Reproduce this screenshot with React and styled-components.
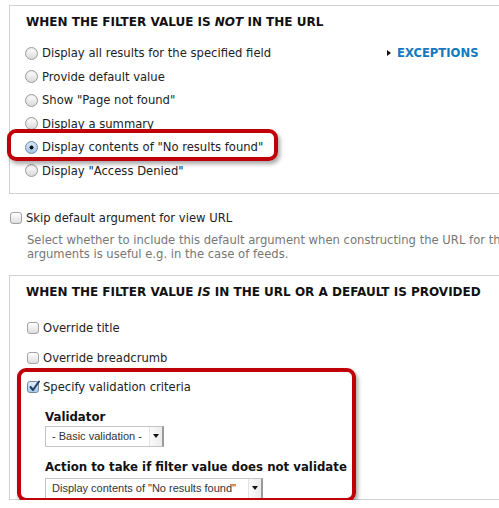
import styled, { createGlobalStyle } from 'styled-components';

const GlobalStyle = createGlobalStyle`
  html, body {
    margin: 0;
    padding: 0;
    background: #fff;
    overflow: hidden;
  }
  body {
    font-family: "DejaVu Sans", "Liberation Sans", sans-serif;
    color: #222;
  }
`;

const Page = styled.div`
  width: 720px;
  padding: 5px 0 0 9px;
  box-sizing: border-box;
`;

const Fieldset = styled.div`
  width: 580px;
  border: 1px solid #d2d2d2;
  padding: ${(p) => p.$padding};
  box-sizing: border-box;
`;

const Legend = styled.div`
  font-size: 12px;
  font-weight: bold;
  line-height: 15px;
  text-transform: uppercase;
  color: #111;
  white-space: nowrap;

  em {
    font-style: italic;
  }
`;

const OptionsArea = styled.div`
  display: grid;
  grid-template-columns: 362px auto;
  align-items: start;
  margin-top: 11.25px;
  margin-left: -1px;
`;

const RadioList = styled.div`
  display: flex;
  flex-direction: column;
`;

const Row = styled.label`
  position: relative;
  display: flex;
  align-items: center;
  gap: 4px;
  height: ${(p) => p.$height || 23.5}px;
  font-size: 11.6px;
  white-space: nowrap;
  color: #222;
`;

const Radio = styled.span`
  flex: none;
  width: 13px;
  height: 13px;
  box-sizing: border-box;
  border-radius: 50%;
  border: 1px solid ${(p) => (p.$checked ? '#6f8aa6' : '#9b9b9b')};
  background: ${(p) =>
    p.$checked
      ? 'radial-gradient(circle at 50% 50%, #111 0 1.7px, transparent 2.3px), linear-gradient(#dcebf8, #9fc3e6)'
      : 'linear-gradient(#ffffff, #d9d9d9)'};
  box-shadow: inset 0 1px 1px rgba(0, 0, 0, 0.08);
`;

const Box = styled.span`
  flex: none;
  position: relative;
  width: 12px;
  height: 12px;
  box-sizing: border-box;
  border-radius: 3px;
  border: 1px solid ${(p) => (p.$checked ? '#6f8aa6' : '#a3a3a3')};
  background: ${(p) =>
    p.$checked ? 'linear-gradient(#e2eef9, #a9c8e6)' : 'linear-gradient(#ffffff, #dedede)'};

  svg {
    position: absolute;
    left: 0px;
    top: -2px;
  }
`;

const Highlight = styled.span`
  position: absolute;
  left: ${(p) => p.$left}px;
  top: ${(p) => p.$top}px;
  width: ${(p) => p.$width}px;
  height: ${(p) => p.$height}px;
  box-sizing: border-box;
  border: 4.5px solid #c00008;
  border-radius: 9px;
  box-shadow: 2px 3px 4px rgba(0, 0, 0, 0.35);
  pointer-events: none;
  z-index: 2;
`;

const Exceptions = styled.a`
  display: flex;
  align-items: center;
  gap: 6px;
  height: 23.5px;
  font-size: 11.6px;
  font-weight: bold;
  color: #1279c2;
  text-decoration: none;
  text-transform: uppercase;

  &::before {
    content: '';
    width: 0;
    height: 0;
    border-top: 3px solid transparent;
    border-bottom: 3px solid transparent;
    border-left: 4px solid #111;
  }
`;

const SkipRow = styled(Row)`
  margin-top: 15px;
  margin-left: 1px;
  height: 18px;
`;

const Description = styled.div`
  margin: 6px 0 0 18px;
  font-size: 11.6px;
  line-height: 14px;
  color: #777;
  white-space: nowrap;
`;

const Second = styled(Fieldset)`
  margin-top: 14px;
`;

const CheckList = styled.div`
  display: flex;
  flex-direction: column;
  margin-top: 13.75px;
  margin-left: 1px;
`;

const Group = styled.div`
  position: relative;
`;

const SubForm = styled.div`
  display: flex;
  flex-direction: column;
  align-items: flex-start;
  margin-left: 18px;
`;

const FieldLabel = styled.div`
  font-size: 11.75px;
  font-weight: bold;
  line-height: 14px;
  color: #111;
  white-space: nowrap;
  margin-top: ${(p) => p.$top}px;
`;

const Select = styled.div`
  display: flex;
  align-items: stretch;
  width: ${(p) => p.$width}px;
  height: 21px;
  margin-top: ${(p) => p.$top}px;
  box-sizing: border-box;
  border: 1px solid #c4c4c4;
  border-right: 2px solid #9a9a9a;
  background: #fff;
  font-family: "Liberation Sans", Arial, sans-serif;
  font-size: 11px;
  color: #333;
`;

const SelectText = styled.span`
  flex: 1;
  display: flex;
  align-items: center;
  padding-left: 6px;
  white-space: nowrap;
`;

const SelectButton = styled.span`
  flex: none;
  width: 12px;
  display: flex;
  align-items: center;
  justify-content: center;
  border-left: 1px solid #e4e4e4;
  background: linear-gradient(90deg, #fafafa, #ececec);

  &::after {
    content: '';
    width: 0;
    height: 0;
    border-left: 3px solid transparent;
    border-right: 3px solid transparent;
    border-top: 4px solid #111;
  }
`;

function Check() {
  return (
    <svg width="13" height="13" viewBox="0 0 13 13">
      <path d="M2.5 7 L5 10 L11 1.5" fill="none" stroke="#1d3e66" strokeWidth="2" strokeLinecap="round" strokeLinejoin="round" />
    </svg>
  );
}

const radios = [
  'Display all results for the specified field',
  'Provide default value',
  'Show "Page not found"',
  'Display a summary',
  'Display contents of "No results found"',
  'Display "Access Denied"',
];

export default function App() {
  return (
    <>
      <GlobalStyle />
      <Page>
        <Fieldset $padding="9px 0 10.75px 16px">
          <Legend>
            When the filter value is <em>not</em> in the URL
          </Legend>
          <OptionsArea>
            <RadioList>
              {radios.map((text, i) => (
                <Row key={text}>
                  <Radio $checked={i === 4} />
                  {text}
                  {i === 4 && <Highlight $left={-18} $top={-6.75} $width={271} $height={32} />}
                </Row>
              ))}
            </RadioList>
            <Exceptions href="#">Exceptions</Exceptions>
          </OptionsArea>
        </Fieldset>

        <SkipRow>
          <Box />
          Skip default argument for view URL
        </SkipRow>
        <Description>
          Select whether to include this default argument when constructing the URL for this view. Skipping default
          <br />
          arguments is useful e.g. in the case of feeds.
        </Description>

        <Second $padding="8.5px 0 0 16px">
          <Legend>
            When the filter value <em>is</em> in the URL or a default is provided
          </Legend>
          <CheckList>
            <Row $height={29.5}>
              <Box />
              Override title
            </Row>
            <Row $height={29.5}>
              <Box />
              Override breadcrumb
            </Row>
            <Group>
              <Row $height={29.5}>
                <Box $checked>
                  <Check />
                </Box>
                Specify validation criteria
              </Row>
              <SubForm>
                <FieldLabel $top={8}>Validator</FieldLabel>
                <Select $width={119} $top={2}>
                  <SelectText>- Basic validation -</SelectText>
                  <SelectButton />
                </Select>
                <FieldLabel $top={13.5}>Action to take if filter value does not validate</FieldLabel>
                <Select $width={218} $top={3.5}>
                  <SelectText>Display contents of "No results found"</SelectText>
                  <SelectButton />
                </Select>
              </SubForm>
              <Highlight $left={-10} $top={-4.25} $width={339} $height={134} />
            </Group>
          </CheckList>
        </Second>
      </Page>
    </>
  );
}
